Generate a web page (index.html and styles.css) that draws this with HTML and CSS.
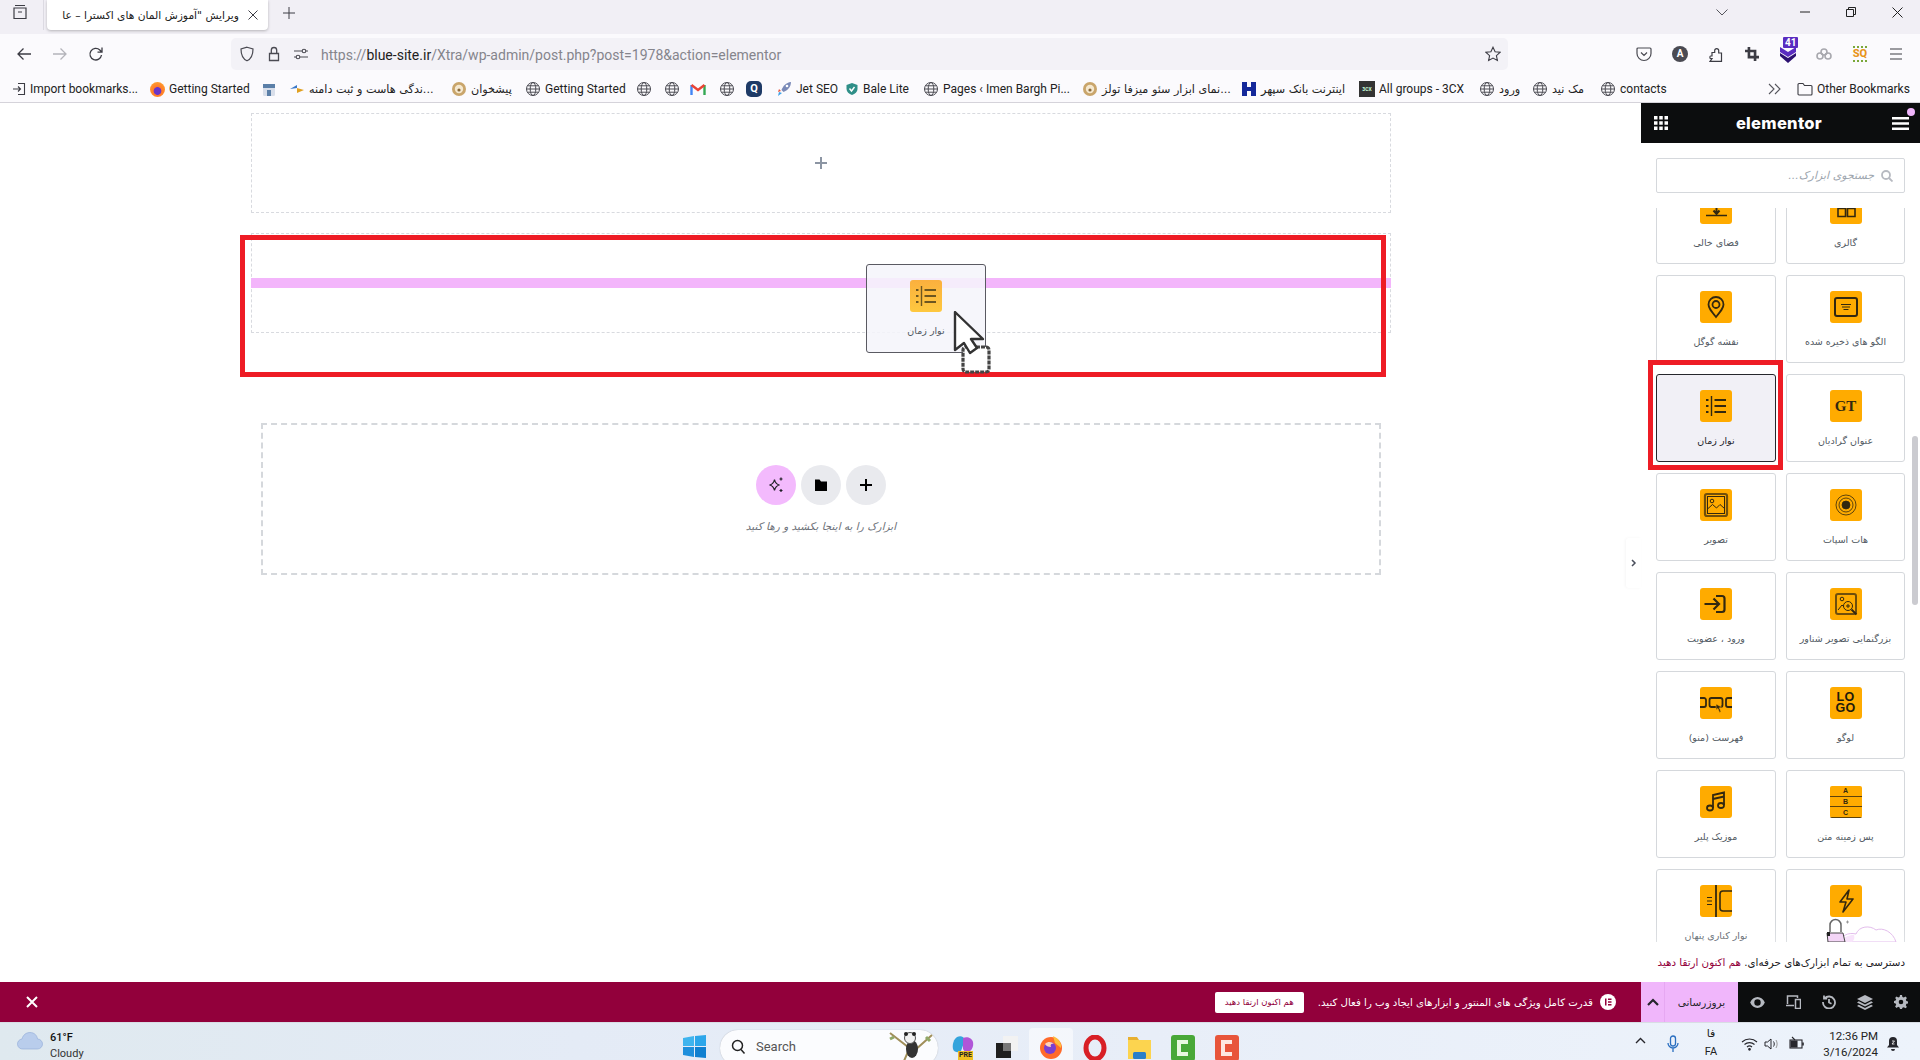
FILE: index.html
```html
<!DOCTYPE html>
<html lang="fa">
<head>
<meta charset="utf-8">
<title>Elementor</title>
<link rel="stylesheet" href="styles.css">
</head>
<body>
<svg class="defs" aria-hidden="true">
  <symbol id="globe" viewBox="0 0 16 16"><g fill="none" stroke="#4a4a52" stroke-width="1"><circle cx="8" cy="8" r="6.5"/><ellipse cx="8" cy="8" rx="2.8" ry="6.5"/><path d="M1.5 8h13M2.5 4.8h11M2.5 11.2h11"/></g></symbol>
  <symbol id="lion" viewBox="0 0 16 16"><circle cx="8" cy="8" r="7" fill="#c9a56b"/><circle cx="8" cy="8" r="4.2" fill="#f5e8cf"/><circle cx="8" cy="9" r="1.6" fill="#8a6a3a"/></symbol>
</svg>

<header class="tabs">
  <div class="tab-list"><svg width="16" height="16" viewBox="0 0 16 16" fill="none" stroke="#3c3c44" stroke-width="1.2"><path d="M3 1.5h10M2 4h12v10.5H2zM6 8h4"/></svg></div>
  <div class="tab-sep"></div>
  <div class="tab">
    <span class="tab-title">ویرایش "آموزش المان های اکسترا – عا</span>
    <svg width="10" height="10" viewBox="0 0 10 10" stroke="#3c3c44" fill="none"><path d="M.5.5l9 9M9.5.5l-9 9"/></svg>
  </div>
  <div class="tab-new"><svg width="12" height="12" viewBox="0 0 12 12" stroke="#3c3c44" fill="none"><path d="M6 0v12M0 6h12"/></svg></div>
  <div class="win">
    <svg class="win-chev" width="12" height="7" viewBox="0 0 12 7" stroke="#55555c" fill="none"><path d="M.5.5L6 6l5.5-5.5"/></svg>
    <svg class="win-btn" width="10" height="10" viewBox="0 0 10 10" stroke="#222" fill="none"><path d="M0 5h10"/></svg>
    <svg class="win-btn" width="10" height="10" viewBox="0 0 10 10" stroke="#222" fill="none"><path d="M.5 2.5h7v7h-7zM2.5 2.5v-2h7v7h-2"/></svg>
    <svg class="win-btn" width="11" height="11" viewBox="0 0 11 11" stroke="#222" fill="none"><path d="M.5.5l10 10M10.5.5l-10 10"/></svg>
  </div>
</header>

<nav class="nav">
  <div class="nav-btn"><svg width="16" height="16" viewBox="0 0 16 16" fill="none" stroke="#3c3c44" stroke-width="1.3"><path d="M15 8H2M7.5 2.5L2 8l5.500 5.500"/></svg></div>
  <div class="nav-btn"><svg width="16" height="16" viewBox="0 0 16 16" fill="none" stroke="#b4b4ba" stroke-width="1.3"><path d="M1 8h13M8.500 2.500L14 8l-5.500 5.500"/></svg></div>
  <div class="nav-btn"><svg width="16" height="16" viewBox="0 0 16 16" fill="none" stroke="#3c3c44" stroke-width="1.3"><path d="M13.500 9a5.800 5.800 0 1 1-1.700-5L14 6.200M14 1.500v4.700H9.500"/></svg></div>
  <div class="url">
    <svg class="url-ic" width="16" height="16" viewBox="0 0 16 16" fill="none" stroke="#4a4a52" stroke-width="1.2"><path d="M8 1.200l6 1.800c0 6-1.500 9.800-6 11.800-4.500-2-6-5.800-6-11.800z"/></svg>
    <svg class="url-ic" width="16" height="16" viewBox="0 0 16 16" fill="none" stroke="#4a4a52" stroke-width="1.3"><path d="M3.500 7.500h9v7h-9zM5.300 7.500V4.200a2.700 2.700 0 0 1 5.400 0v3.300"/></svg>
    <svg class="url-ic" width="16" height="16" viewBox="0 0 16 16" fill="none" stroke="#4a4a52" stroke-width="1.1"><path d="M1 5h8M13 5h2M1 11h2M7 11h8"/><circle cx="11" cy="5" r="1.800"/><circle cx="5" cy="11" r="1.800"/></svg>
    <span class="url-text">https://<b>blue-site.ir</b>/Xtra/wp-admin/post.php?post=1978&amp;action=elementor</span>
    <svg class="url-star" width="16" height="16" viewBox="0 0 16 16" fill="none" stroke="#3c3c44" stroke-width="1.1"><path d="M8 1.200l2.100 4.500 4.900.6-3.600 3.300 1 4.900L8 12.100l-4.400 2.400 1-4.900L1 6.300l4.900-.6z"/></svg>
  </div>
  <div class="tools">
    <div class="tool"><svg width="16" height="16" viewBox="0 0 16 16" fill="none" stroke="#4a4a52" stroke-width="1.2"><path d="M2 2h12a1 1 0 0 1 1 1v4.500a7 7 0 0 1-14 0V3a1 1 0 0 1 1-1zM5 6.500l3 3 3-3"/></svg></div>
    <div class="tool"><span class="avatar">A</span></div>
    <div class="tool"><svg width="14" height="16" viewBox="0 0 14 16" fill="none" stroke="#3c3c44" stroke-width="1.200"><path d="M1 15.300h11.500V7H9.700V4.800a2 2 0 0 0-2-2.200 2 2 0 0 0-2 2.200V6.500H3V10H1.500c-.8 0-.8 2.500 0 2.500H3z"/></svg></div>
    <div class="tool"><svg width="14" height="14" viewBox="0 0 16 16" fill="none" stroke="#3c3c44" stroke-width="3"><path d="M4.500 0v11.500H16M0 4.500h11.500V16"/></svg></div>
    <div class="tool ublock"><svg width="18" height="20" viewBox="0 0 18 20"><path d="M1 3l8 5 8-5v5l-8 5-8-5z" fill="#5a2cc0"/><path d="M1 9l8 5 8-5v3l-8 7-8-7z" fill="#2c1070"/></svg><span class="ublock-n">41</span></div>
    <div class="tool"><svg width="18" height="16" viewBox="0 0 18 16" fill="none" stroke="#a8a8ae" stroke-width="1.6"><circle cx="5" cy="10" r="3"/><circle cx="9" cy="6" r="3"/><circle cx="13" cy="10" r="3"/></svg></div>
    <div class="tool"><span class="sq">SQ</span></div>
    <div class="tool"><svg width="14" height="12" viewBox="0 0 14 12" stroke="#3c3c44" fill="none" stroke-width="1.2"><path d="M1 1h12M1 6h12M1 11h12"/></svg></div>
  </div>
</nav>

<div class="bookmarks">
  <div class="bm"><svg width="14" height="14" viewBox="0 0 14 14" fill="none" stroke="#3c3c44" stroke-width="1.1"><path d="M6 1.500h6.500v11H6M1 7h7.500M6 4.500L8.500 7 6 9.500"/></svg><span>Import bookmarks...</span></div>
  <div class="bm"><span class="ff-sm"></span><span>Getting Started</span></div>
  <div class="bm"><svg width="14" height="16" viewBox="0 0 14 16"><rect x="1" y="3" width="12" height="12" rx="1.500" fill="#d8deea"/><rect x="1" y="3" width="12" height="4" fill="#5b7fa8"/><rect x="5" y="9" width="4" height="6" fill="#5b7fa8"/></svg></div>
  <div class="bm"><svg width="16" height="12" viewBox="0 0 16 12"><path d="M1 6l7-4v3z" fill="#3a78c8"/><path d="M8 5l7 2-7 3z" fill="#e0a020"/></svg><span class="fa">...ندگی هاست و ثبت دامنه</span></div>
  <div class="bm"><svg width="16" height="16"><use href="#lion"/></svg><span class="fa">پیشخوان</span></div>
  <div class="bm"><svg width="16" height="16"><use href="#globe"/></svg><span>Getting Started</span></div>
  <div class="bm"><svg width="16" height="16"><use href="#globe"/></svg></div>
  <div class="bm"><svg width="16" height="16"><use href="#globe"/></svg></div>
  <div class="bm"><svg width="16" height="12" viewBox="0 0 16 12" fill="none" stroke-width="2.400"><path d="M1.500 12V2" stroke="#4285f4"/><path d="M14.500 12V2" stroke="#34a853"/><path d="M1.500 2L8 7l6.500-5" stroke="#ea4335"/></svg></div>
  <div class="bm"><svg width="16" height="16"><use href="#globe"/></svg></div>
  <div class="bm"><span class="bm-q">Q</span></div>
  <div class="bm"><svg width="16" height="16" viewBox="0 0 16 16"><path d="M15 1c-5 .5-8 4-9.500 8l2 2C11.500 9.500 15 6 15 1z" fill="#7a8ab8"/><circle cx="11" cy="5" r="1.300" fill="#fff"/><path d="M5 10l-3 1 1-3z" fill="#e8523a"/><path d="M6 12l-4 3 1-4z" fill="#3aa0e8"/></svg><span>Jet SEO</span></div>
  <div class="bm"><svg width="14" height="14" viewBox="0 0 14 14"><path d="M7 1l5.500 2v4c0 3-2.500 5-5.500 6-3-1-5.500-3-5.500-6V3z" fill="#2f8f88"/><path d="M4.500 6.500L6.500 9l3-4" fill="none" stroke="#fff" stroke-width="1.400"/></svg><span>Bale Lite</span></div>
  <div class="bm"><svg width="16" height="16"><use href="#globe"/></svg><span>Pages ‹ Imen Bargh Pi...</span></div>
  <div class="bm"><svg width="16" height="16"><use href="#lion"/></svg><span class="fa">...نمای ابزار سئو میزفا تولز</span></div>
  <div class="bm"><svg width="16" height="16" viewBox="0 0 16 16" fill="#14289a"><path d="M1 1h5v14H1zM10 1h5v14h-5z"/><path d="M6 6h4v4H6z"/></svg><span class="fa">اینترنت بانک سپهر</span></div>
  <div class="bm"><span class="bm-3cx">3CX</span><span>All groups - 3CX</span></div>
  <div class="bm"><svg width="16" height="16"><use href="#globe"/></svg><span class="fa">ورود</span></div>
  <div class="bm"><svg width="16" height="16"><use href="#globe"/></svg><span class="fa">مک نید</span></div>
  <div class="bm"><svg width="16" height="16"><use href="#globe"/></svg><span>contacts</span></div>
  <div class="bm"><svg width="14" height="12" viewBox="0 0 14 12" fill="none" stroke="#55555c" stroke-width="1.100"><path d="M1 1l5 5-5 5M7 1l5 5-5 5"/></svg></div>
  <div class="bm"><svg width="16" height="14" viewBox="0 0 16 14" fill="none" stroke="#3c3c44" stroke-width="1.100"><path d="M1 12V2.500A1 1 0 0 1 2 1.500h4l1.500 2H14a1 1 0 0 1 1 1V12a1 1 0 0 1-1 1H2a1 1 0 0 1-1-1z"/></svg><span>Other Bookmarks</span></div>
</div>

<main class="main">
  <section class="canvas">
    <div class="sec sec-top">
      <svg width="14" height="14" viewBox="0 0 14 14" stroke="#8c95a3" stroke-width="2" fill="none"><path d="M7 1v12M1 7h12"/></svg>
    </div>
    <div class="sec sec-drop"><div class="drop-line"></div></div>
    <div class="dropzone">
      <div class="dz-btns">
        <span class="dz-btn dz-ai"><svg width="18" height="18" viewBox="0 0 18 18" fill="none" stroke="#1d1d24" stroke-width="1.200"><path d="M7.500 3.500c.7 3.700 1.800 4.800 5 5.500-3.200.7-4.300 1.800-5 5.500-.7-3.700-1.800-4.800-5-5.500 3.200-.7 4.300-1.800 5-5.500z"/><path d="M14 1.500v3M12.500 3h3M14 13v3M12.500 14.500h3"/></svg></span>
        <span class="dz-btn"><svg width="14" height="14" viewBox="0 0 14 14" fill="#000"><path d="M1 1.500h4.500L7 3.500h6V13H1z"/></svg></span>
        <span class="dz-btn"><svg width="12" height="12" viewBox="0 0 12 12" stroke="#000" stroke-width="2" fill="none"><path d="M6 0v12M0 6h12"/></svg></span>
      </div>
      <p class="dz-text">ابزارک را به اینجا بکشید و رها کنید</p>
    </div>
    <div class="promo-bar">
      <button class="pb-close"><svg width="12" height="12" viewBox="0 0 12 12" stroke="#fff" stroke-width="2" fill="none"><path d="M1 1l10 10M11 1L1 11"/></svg></button>
      <div class="pb-msg">
        <span class="pb-logo"><svg width="16" height="16" viewBox="0 0 16 16"><circle cx="8" cy="8" r="8" fill="#fff"/><path d="M5 4.500h1.500v7H5zM8 4.500h3.500V6H8zM8 7.250h3.500v1.500H8zM8 10h3.500v1.500H8z" fill="#92003b"/></svg></span>
        <span class="pb-text">قدرت کامل ویژگی های المنتور و ابزارهای ایجاد وب را فعال کنید.</span>
        <span class="pb-cta">هم اکنون ارتقا دهید</span>
      </div>
    </div>
  </section>

  <aside class="panel">
    <div class="p-head">
      <svg width="14" height="14" viewBox="0 0 14 14" fill="#fff"><path d="M0 0h3.500v3.500H0zM5.250 0h3.500v3.500h-3.500zM10.500 0H14v3.500h-3.500zM0 5.250h3.500v3.500H0zM5.250 5.250h3.500v3.500h-3.500zM10.500 5.250H14v3.500h-3.500zM0 10.500h3.500V14H0zM5.250 10.500h3.500V14h-3.500zM10.500 10.500H14V14h-3.500z"/></svg>
      <span class="p-logo">elementor</span>
      <svg width="17" height="13" viewBox="0 0 17 13" fill="#fff"><path d="M0 0h17v2.600H0zM0 5.200h17v2.600H0zM0 10.400h17V13H0z"/></svg>
      <i class="p-dot"></i>
    </div>
    <div class="p-search">
      <div class="p-input">
        <svg width="12" height="12" viewBox="0 0 12 12" fill="none" stroke="#b7bac1" stroke-width="1.800"><circle cx="5" cy="5" r="4"/><path d="M8 8l3.500 3.500"/></svg>
        <span>جستجوی ابزارک...</span>
      </div>
    </div>
    <div class="p-scroll">
      <div class="p-grid">
        <div class="w"><span class="w-i"><svg viewBox="0 0 32 32" fill="none" stroke="#33280f" stroke-width="1.600"><path d="M8 16.500h7.500v8H8zM17.500 16.500H25v8h-7.500z"/></svg></span><span class="w-l">گالری</span></div>
        <div class="w"><span class="w-i"><svg viewBox="0 0 32 32" fill="none" stroke="#33280f" stroke-width="1.600"><path d="M6 23.500h21"/><path d="M16.500 10v12M13.500 18.500l3 3.500 3-3.500" stroke-width="2"/></svg></span><span class="w-l">فضای خالی</span></div>
        <div class="w"><span class="w-i"><svg viewBox="0 0 32 32" fill="none" stroke="#33280f" stroke-width="2"><rect x="5" y="7" width="22" height="18" rx="2"/><path d="M11 13.500h10M12 16h8M13.500 18.500h5" stroke-width="1"/></svg></span><span class="w-l">الگو های ذخیره شده</span></div>
        <div class="w"><span class="w-i"><svg viewBox="0 0 32 32" fill="none" stroke="#33280f" stroke-width="1.800"><path d="M16 26c-5-6-7.500-9-7.500-12.500a7.500 7.500 0 0 1 15 0C23.500 17 21 20 16 26z"/><circle cx="16" cy="13.500" r="3.500"/></svg></span><span class="w-l">نقشه گوگل</span></div>
        <div class="w"><span class="w-i w-gt">GT</span><span class="w-l">عنوان گرادیان</span></div>
        <div class="w w-on"><span class="w-i"><svg viewBox="0 0 32 32" fill="none" stroke="#33280f"><path d="M6 10h2.500M6 16h2.500M6 22h2.500" stroke-width="2"/><path d="M11.500 6v20" stroke-width="1.400"/><path d="M14.500 10H26M14.500 16H26M14.500 22H26" stroke-width="1.800"/></svg></span><span class="w-l">نوار زمان</span></div>
        <div class="w"><span class="w-i"><svg viewBox="0 0 32 32" fill="none" stroke="#33280f" stroke-width=".8"><circle cx="16" cy="16" r="4" fill="#33280f"/><circle cx="16" cy="16" r="7"/><circle cx="16" cy="16" r="10"/></svg></span><span class="w-l">هات اسپات</span></div>
        <div class="w"><span class="w-i"><svg viewBox="0 0 32 32" fill="none" stroke="#33280f" stroke-width="1"><rect x="5" y="5" width="22" height="22" rx="2" stroke-width="2.200" stroke-opacity=".7"/><rect x="7.500" y="7.500" width="17" height="17"/><circle cx="12" cy="12" r="1.800"/><path d="M7.500 20l5-4.500 4 3.500 3.500-3.500 4.500 4"/></svg></span><span class="w-l">تصویر</span></div>
        <div class="w"><span class="w-i"><svg viewBox="0 0 32 32" fill="none" stroke="#33280f" stroke-width="1"><rect x="6" y="6" width="20" height="20" rx="2" stroke-width="2" stroke-opacity=".7"/><circle cx="12" cy="11" r="1.800"/><circle cx="18" cy="18" r="4.500"/><path d="M16 18h4M18 16v4"/><path d="M21.500 21.500l5 5" stroke-width="2"/><path d="M8 22l4-5 2 2"/></svg></span><span class="w-l">بزرگنمایی تصویر شناور</span></div>
        <div class="w"><span class="w-i"><svg viewBox="0 0 32 32" fill="none" stroke="#33280f" stroke-width="2.200"><path d="M4.500 16H19M13.500 10.500L19 16l-5.500 5.500M16 8h6a2.500 2.500 0 0 1 2.500 2.500v11A2.500 2.500 0 0 1 22 24h-6"/></svg></span><span class="w-l">ورود ، عضویت</span></div>
        <div class="w"><span class="w-i w-logo">LO<br>GO</span><span class="w-l">لوگو</span></div>
        <div class="w"><span class="w-i"><svg viewBox="0 0 32 32" fill="none" stroke="#33280f" stroke-width="1.800"><path d="M0 11h4a2 2 0 0 1 2 2v5a2 2 0 0 1-2 2H0M32 11h-4a2 2 0 0 0-2 2v5a2 2 0 0 0 2 2h4"/><rect x="9.500" y="11" width="13" height="9" rx="2"/><path d="M16 17l5.500 3-2.200.8 1.700 4-1.500.6-1.600-4-1.700 1.500z" fill="#33280f" stroke="#ffab00" stroke-width=".6"/></svg></span><span class="w-l">فهرست (منو)</span></div>
        <div class="w"><span class="w-i w-abc"><span>A</span><span>B</span><span>C</span></span><span class="w-l">پس زمینه متن</span></div>
        <div class="w"><span class="w-i"><svg viewBox="0 0 32 32" fill="none" stroke="#33280f" stroke-width="1.800"><path d="M13 22V9l11-2.500v12.500"/><ellipse cx="10" cy="22" rx="3" ry="2.500"/><ellipse cx="21" cy="19.500" rx="3" ry="2.500"/><path d="M13 13l11-2.500"/></svg></span><span class="w-l">موزیک پلیر</span></div>
        <div class="w"><span class="w-i"><svg viewBox="0 0 32 32" fill="none" stroke="#33280f" stroke-width="1.600" stroke-linejoin="round"><path d="M19 5l-9 12h6l-3 10 10-13h-6z"/></svg></span></div>
        <div class="w"><span class="w-i"><svg viewBox="0 0 32 32" fill="none" stroke="#33280f"><path d="M16 0v32" stroke-width="1.800"/><path d="M32 6h-9a3 3 0 0 0-3 3v14a3 3 0 0 0 3 3h9" stroke-width="1.600"/><path d="M7 12.500h5M7 16h5M7 19.500h5" stroke-width="1.200"/></svg></span><span class="w-l">نوار کناری پنهان</span></div>
      </div>
      <div class="p-fade"></div>
      <svg class="p-art" width="76" height="24" viewBox="0 0 76 24" fill="none">
        <path d="M14 24c1-6 8-10 16-8 3-8 14-9 20-4 7-3 17 2 20 12z" fill="#fff" stroke="#e3bdec" stroke-width="1"/>
        <path d="M16 24c1-5 6-7 12-7 1 3 0 5-2 7z" fill="#f8e4fb"/>
        <path d="M4 14V7a5.500 5.500 0 0 1 11 0v7" stroke="#666" stroke-width="1.500"/>
        <path d="M1 15h16l2 9H2z" fill="#f3d5f6" stroke="#444" stroke-width="1"/>
        <rect x="1" y="14" width="3" height="4" fill="#222"/>
        <path d="M20 4h3M21.500 2.500v3" stroke="#888" stroke-width=".8"/>
      </svg>
    </div>
    <div class="p-promo">دسترسی به تمام ابزارک‌های حرفه‌ای. <a>هم اکنون ارتقا دهید</a></div>
    <div class="p-foot">
      <div class="pf-pink">
        <span class="pf-chev"><svg width="12" height="8" viewBox="0 0 12 8" fill="none" stroke="#26262c" stroke-width="2.200"><path d="M1 7l5-5 5 5"/></svg></span>
        <span class="pf-update">بروزرسانی</span>
      </div>
      <div class="pf-tools">
        <span><svg width="15" height="11" viewBox="0 0 16 12" fill="#b6b9c0"><path d="M8 0c3.500 0 6.500 2.500 8 6-1.500 3.500-4.500 6-8 6S1.500 9.500 0 6c1.500-3.500 4.500-6 8-6zm0 2.500a3.500 3.500 0 1 0 0 7 3.500 3.500 0 0 0 0-7z"/></svg></span>
        <span><svg width="15" height="14" viewBox="0 0 15 14" fill="none" stroke="#b6b9c0" stroke-width="1.500"><path d="M1.500 9V1h10v2M0 10.500h8M9.500 4.500h5v9h-5z"/></svg></span>
        <span><svg width="14" height="14" viewBox="0 0 14 14" fill="none" stroke="#b6b9c0" stroke-width="1.800"><path d="M2.500 3.500A6 6 0 1 1 1 7M2 .5v3.200h3.200M7 4v3.500l2.500 1.200"/></svg></span>
        <span><svg width="16" height="15" viewBox="0 0 16 15" fill="#b6b9c0"><path d="M8 0l8 4-8 4-8-4zM1.800 6.300L8 9.500l6.200-3.200L16 7.500l-8 4-8-4zM1.800 9.800L8 13l6.200-3.200L16 11l-8 4-8-4z"/></svg></span>
        <span><svg width="14" height="14" viewBox="0 0 14 14" fill="#b6b9c0"><path d="M6 0h2l.4 2 1.400.6L11.500 1.500 12.900 3l-1.100 1.700.6 1.300 1.600.4v2l-1.600.4-.6 1.400 1.100 1.700-1.400 1.400-1.700-1.100-1.400.6L8 14H6l-.4-1.600-1.400-.6-1.700 1.100L1.100 11.500l1.100-1.700-.6-1.400L0 8V6l1.600-.4.600-1.300L1.100 3l1.400-1.500 1.700 1.100 1.400-.6zM7 4.700a2.300 2.300 0 1 0 0 4.600 2.300 2.300 0 0 0 0-4.600z"/></svg></span>
      </div>
    </div>
    <div class="p-scrollbar"></div>
    <div class="p-toggle"><svg width="6" height="8" viewBox="0 0 6 8" fill="none" stroke="#4a4f5c" stroke-width="1.500"><path d="M1 1l3 3-3 3"/></svg></div>
  </aside>

  <div class="mark mark-canvas"></div>
  <div class="mark mark-widget"></div>
  <div class="drag">
    <span class="w-i drag-i"><svg viewBox="0 0 32 32" fill="none" stroke="#6d5620"><path d="M6 10h2.500M6 16h2.500M6 22h2.500" stroke-width="2"/><path d="M11.500 6v20" stroke-width="1.400"/><path d="M14.500 10H26M14.500 16H26M14.500 22H26" stroke-width="1.800"/></svg></span>
    <span class="w-l">نوار زمان</span>
  </div>
  <svg class="cursor" width="40" height="64" viewBox="0 0 40 64">
    <rect x="10" y="36" width="26" height="25" rx="3" fill="#fff" stroke="#444" stroke-width="3.200" stroke-dasharray="4 1"/>
    <path d="M2 1v38l9-7 6 10 7-5-6-9h12z" fill="#fff" stroke="#333" stroke-width="2.400" stroke-linejoin="round"/>
  </svg>
</main>

<footer class="taskbar">
  <div class="tb-weather">
    <svg width="26" height="18" viewBox="0 0 26 18"><path d="M6 17a5 5 0 0 1-1-10c1-4 4-6.500 8-6.500 4.500 0 7 3 7.500 6.500a5 5 0 0 1 0 10z" fill="#b9cdec" stroke="#8eaad6" stroke-width=".6"/></svg>
    <div class="tb-wtext"><b>61°F</b><span>Cloudy</span></div>
  </div>
  <div class="tb-center">
    <svg class="tb-start" width="23" height="23" viewBox="0 0 23 23"><path d="M0 3l11-2v10H0z" fill="#3fb4ee"/><path d="M12 1l11-1v11H12z" fill="#2ca6ea"/><path d="M0 12h11v10L0 20z" fill="#1e8fdc"/><path d="M12 12h11v11l-11-1z" fill="#0f7fd0"/></svg>
    <div class="tb-search">
      <svg width="15" height="15" viewBox="0 0 15 15" fill="none" stroke="#222" stroke-width="1.500"><circle cx="6.500" cy="6.500" r="5"/><path d="M10 10.500l3.500 4"/></svg>
      <span>Search</span>
      <svg class="tb-panda" width="46" height="30" viewBox="0 0 46 30"><path d="M2 2l18 14M44 4L26 20M16 30l6-14" stroke="#a08f5a" stroke-width="2" fill="none"/><path d="M6 6l-4 2M38 6l4 4" stroke="#90a868" stroke-width="3"/><ellipse cx="24" cy="18" rx="6" ry="9" fill="#333"/><circle cx="22" cy="7" r="5.500" fill="#f1f1f1" stroke="#555"/><circle cx="18" cy="3" r="2" fill="#222"/><circle cx="26" cy="3" r="2" fill="#222"/></svg>
    </div>
    <div class="tb-app tb-copilot"><svg width="24" height="24" viewBox="0 0 24 24"><path d="M6 2c4-2 7 0 8 3l-4 11c-1 2-7 2-8-2C1 9 3 4 6 2z" fill="#34a4dc"/><path d="M12 3c4-2 9 0 10 4 1 5-2 10-6 10-2 0-3-1-4-3z" fill="#b056d8"/></svg><span class="pre">PRE</span></div>
    <div class="tb-app"><svg width="24" height="24" viewBox="0 0 24 24"><rect x="8" y="1" width="15" height="15" fill="#f2f2f2"/><path d="M1 8h15v15H1z" fill="#1e1e1e"/><path d="M8 8h8v8H8z" fill="#777"/></svg></div>
    <div class="tb-app tb-active"><svg width="24" height="24" viewBox="0 0 24 24"><circle cx="12" cy="13" r="11" fill="#ff6a2b"/><path d="M14 1c5 2 9 7 8 12L16 8z" fill="#ffbd3a"/><circle cx="11" cy="13" r="6" fill="#7b3fd0"/><path d="M6 9c3-3 7-2 9 0-3-1-4 1-3 3-3 0-5-1-6-3z" fill="#ffd2b8"/></svg></div>
    <div class="tb-app"><svg width="24" height="26" viewBox="0 0 24 26"><ellipse cx="12" cy="13" rx="9" ry="11" fill="none" stroke="#d81f26" stroke-width="5"/></svg></div>
    <div class="tb-app"><svg width="24" height="24" viewBox="0 0 24 24"><path d="M1 2h9l2 3H1z" fill="#e8b030"/><path d="M1 5h23v19H1z" fill="#fcd44f"/><rect x="6" y="17" width="13" height="7" rx="1.500" fill="#2a7fc8"/></svg></div>
    <div class="tb-app"><svg width="24" height="26" viewBox="0 0 24 26"><rect width="24" height="26" rx="3" fill="#48a838"/><path d="M17 7H8v12h9" fill="none" stroke="#e8f8e0" stroke-width="4"/></svg></div>
    <div class="tb-app"><svg width="24" height="26" viewBox="0 0 24 26"><rect width="24" height="26" rx="3" fill="#e8553a"/><path d="M17 7H8v12h9" fill="none" stroke="#fde8e0" stroke-width="4"/></svg></div>
  </div>
  <div class="tray">
    <svg width="11" height="7" viewBox="0 0 11 7" fill="none" stroke="#26262c" stroke-width="1.400"><path d="M1 6l4.500-4.500L10 6"/></svg>
    <svg class="tr-mic" width="12" height="18" viewBox="0 0 12 18" fill="none" stroke="#2a6fc0" stroke-width="1.300"><rect x="3.500" y="1" width="5" height="10" rx="2.500"/><path d="M1 8a5 5 0 0 0 10 0M6 13v4"/></svg>
    <div class="tr-lang"><span class="fa">فا</span><span>FA</span></div>
    <svg class="tr-wifi" width="17" height="14" viewBox="0 0 17 14" fill="none" stroke="#26262c" stroke-width="1.100"><path d="M1 5a11 11 0 0 1 15 0M3.500 7.500a7.500 7.500 0 0 1 10 0M6 10a3.800 3.800 0 0 1 5 0"/><circle cx="8.500" cy="12.300" r=".8" fill="#26262c"/></svg>
    <svg class="tr-vol" width="17" height="14" viewBox="0 0 17 14" fill="none" stroke="#26262c" stroke-width="1"><path d="M1 5h2.500L7 2v10L3.500 9H1z"/><path d="M9.500 4.500c1 1.500 1 3.500 0 5"/><path d="M12 3c1.500 2.500 1.500 5.500 0 8" stroke="#999"/></svg>
    <svg class="tr-bat" width="16" height="14" viewBox="0 0 16 14" fill="none" stroke="#26262c" stroke-width="1.100"><rect x="1" y="4" width="12" height="8"/><path d="M14 6.500v3" stroke-width="1.600"/><path d="M2 5h6v6H2z" fill="#26262c"/><path d="M3 1l3 3"/></svg>
    <div class="tr-time"><span>12:36 PM</span><span>3/16/2024</span></div>
    <svg class="tr-bell" width="14" height="16" viewBox="0 0 14 16"><path d="M7 1a4 4 0 0 1 4 4v4l2 2.500H1L3 9V5a4 4 0 0 1 4-4zM5 13h4a2 2 0 0 1-4 0z" fill="#26262c"/><path d="M6 5h2.500L6 8h2.500" fill="none" stroke="#fff" stroke-width=".8"/></svg>
  </div>
</footer>
</body>
</html>
```

FILE: styles.css
```css
* { box-sizing: border-box; }
html, body { margin: 0; height: 1060px; overflow: hidden; }
body {
  position: relative;
  display: flex;
  flex-direction: column;
  width: 1920px;
  background: #fff;
  font-family: Roboto, "Open Sans", "DejaVu Sans", sans-serif;
  color: #222;
}
.defs { position: absolute; width: 0; height: 0; }
svg { flex: none; display: block; }
.fa { font-family: "DejaVu Sans", sans-serif; direction: rtl; }

/* tab strip */
.tabs { flex: 0 0 34px; display: flex; background: #f1eff5; position: relative; }
.tab-list { width: 43px; padding: 4px 0 0 12px; }
.tab-sep { width: 1px; height: 30px; background: #dcdae2; }
.tab {
  margin-left: 3px; width: 221px; height: 30px;
  display: flex; align-items: center; gap: 9px;
  padding: 0 11px 0 14px;
  background: #fff; border-radius: 0 0 4px 4px; box-shadow: 0 1px 3px rgba(0,0,0,.25);
}
.tab-title {
  flex: 0 0 178px; direction: rtl; white-space: nowrap;
  font: 10.7px "DejaVu Sans", sans-serif; color: #222;
}
.tab-new { margin-left: 15px; padding-top: 7px; }
.win { margin-left: auto; display: flex; align-items: center; height: 24px; padding-right: 17px; }
.win-chev { margin-right: 72px; }
.win-btn { margin-left: 36px; }
.win-chev + .win-btn { margin-left: 0; }

/* nav */
.nav { flex: 0 0 36px; display: flex; align-items: flex-start; padding: 4px 0 0 6px; background: #fbfafd; }
.nav-btn { width: 36px; height: 32px; display: flex; align-items: center; justify-content: center; }
.url {
  margin-left: 117px; width: 1277px; height: 32px;
  display: flex; align-items: center;
  background: #f3f2f7; border-radius: 5px; padding-left: 8px;
}
.url-ic { margin-right: 11px; }
.url-ic:nth-of-type(3) { margin-right: 12px; }
.url-text { font-size: 14px; color: #85858c; white-space: nowrap; padding-top: 1px; }
.url-text b { font-weight: 400; color: #1e1e22; }
.url-star { margin-left: auto; margin-right: 7px; }
.tools { margin-left: 118px; display: flex; }
.tool { width: 36px; height: 32px; display: flex; align-items: center; justify-content: center; position: relative; }
.avatar {
  width: 16px; height: 16px; border-radius: 50%; background: #4a4a52; color: #fff;
  font: 700 10px/16px Roboto, sans-serif; text-align: center;
}
.ublock-n {
  position: absolute; top: -1px; left: 13px; padding: 0 2px; height: 11px; border-radius: 1px;
  background: #5a2cc0; color: #fff; font: 700 10px/11px Roboto, sans-serif;
}
.sq { font: 800 11px/12px Roboto, sans-serif; color: #e8941a; border-top: 2px dotted #7aa83a; border-bottom: 2px dotted #7aa83a; }

/* bookmarks */
.bookmarks {
  flex: 0 0 33px; background: #fbfafd; border-bottom: 1px solid #d5d3da; padding: 6px 0 0 12px;
  display: grid; align-items: center;
  grid-template-columns: 138px 112px 27px 162px 74px 111px 28px 26px 29px 27px 30px 69px 78px 159px 159px 118px 120px 53px 68px 168px 29px 110px;
  font-size: 12px; white-space: nowrap;
}
.bm { display: flex; align-items: center; gap: 4px; height: 16px; min-width: 0; }
.bm .fa { font-size: 11.2px; }
.ff-sm { width: 15px; height: 15px; border-radius: 50%; background: radial-gradient(circle at 50% 60%, #6a35c8 30%, #ff7a2a 36%, #ffb030); }
.bm-q { width: 16px; height: 16px; border-radius: 5px; background: #1e3a66; color: #fff; font: 700 11px/16px Roboto, sans-serif; text-align: center; }
.bm-3cx { width: 16px; height: 16px; background: #333; color: #cfd; font: 700 5px/16px Roboto, sans-serif; text-align: center; }

/* main */
.main { flex: 1; display: flex; min-height: 0; position: relative; }
.canvas { flex: 0 0 1641px; display: flex; flex-direction: column; padding-top: 10px; background: #fff; }
.sec { flex: 0 0 100px; margin: 0 250px 0 251px; border: 1px dashed #d8dadf; }
.sec-top { display: flex; align-items: center; justify-content: center; margin-bottom: 20px; }
.sec-drop { padding-top: 44px; margin-bottom: 90px; }
.drop-line { height: 10px; margin: 0 -1px; background: #f3b5fb; }
.dropzone {
  flex: 0 0 152px; margin: 0 260px 0 261px;
  border: 2px dashed #d5d8dc;
  padding-top: 40px;
  display: flex; flex-direction: column; align-items: center;
}
.dz-btns { display: flex; gap: 5px; }
.dz-btn { width: 40px; height: 40px; border-radius: 50%; background: #e9eaee; display: flex; align-items: center; justify-content: center; }
.dz-ai { background: #f3bafd; }
.dz-text { margin: 15px 0 0; font: italic 10.5px "DejaVu Sans", sans-serif; color: #6d7179; direction: rtl; }
.promo-bar {
  margin-top: auto; flex: 0 0 40px; background: #92003b; color: #fff;
  display: flex; align-items: center; justify-content: space-between; padding: 0 25px 0 26px;
}
.pb-close { border: 0; background: none; padding: 0; }
.pb-msg { display: flex; align-items: center; direction: rtl; gap: 7px; }
.pb-text { font: 10.2px "DejaVu Sans", sans-serif; white-space: nowrap; }
.pb-cta {
  margin-right: 7px; width: 89px; height: 21px; border-radius: 2px; background: #fff; color: #92003b;
  font: 8.5px/21px "DejaVu Sans", sans-serif; text-align: center; white-space: nowrap;
}

/* panel */
.panel { flex: 1; display: flex; flex-direction: column; min-width: 0; position: relative; background: #fff; }
.p-head {
  flex: 0 0 40px; background: #0c0d0e; color: #fff; position: relative;
  display: flex; align-items: center; justify-content: space-between; padding: 0 11px 0 13px;
}
.p-logo { font: 800 16.5px Inter, sans-serif; letter-spacing: .3px; margin-left: -2px; }
.p-dot { position: absolute; top: 5px; right: 5px; width: 8px; height: 8px; border-radius: 50%; background: #f0b5fb; }
.p-search { flex: 0 0 65px; padding: 15px 15px 0; }
.p-input {
  height: 35px; border: 1px solid #d5d8dc; border-radius: 2px;
  display: flex; align-items: center; direction: rtl; gap: 7px; padding-right: 11px;
  font: italic 11px "DejaVu Sans", sans-serif; color: #9da5ae;
}
.p-scroll { flex: 1; overflow: hidden; position: relative; min-height: 0; }
.p-grid {
  margin: -32px 15px 0; direction: rtl;
  display: grid; grid-template-columns: 119px 120px; column-gap: 10px; grid-auto-rows: 88px; row-gap: 11px;
}
.w {
  border: 1px solid #d5d8dc; border-radius: 3px; background: #fff;
  display: flex; flex-direction: column; align-items: center; padding-top: 15px;
}
.w-on { background: #f1f0f6; border-color: #26262c; }
.w-i {
  flex: none; width: 32px; height: 32px; border-radius: 3px; background: #ffab00; display: block; overflow: hidden;
}
.w-i svg { width: 32px; height: 32px; }
.w-l {
  margin-top: 11px; font: 9.5px/16px "DejaVu Sans", sans-serif; color: #515962;
  white-space: nowrap; direction: rtl;
}
.w-on .w-l { color: #26262c; }
.w-gt { font: 700 15px/32px "Liberation Serif", serif; color: #33280f; text-align: center; }
.w-logo { font: 800 12.5px/11px "Liberation Sans", sans-serif; color: #1e1a0c; text-align: center; padding-top: 5px; letter-spacing: .3px; }
.w-abc {
  display: grid; grid-auto-rows: 1fr; font: 700 7px/1 "Liberation Sans", sans-serif; color: #33280f; text-align: center; direction: ltr; border-radius: 2px;
}
.w-abc span { border-bottom: 1px solid rgba(51,40,15,.8); display: flex; align-items: center; justify-content: center; }
.p-fade {
  position: absolute; left: 0; right: 0; bottom: 0; height: 20px;
  background: linear-gradient(rgba(255,255,255,0), rgba(255,255,255,.2));
}
.p-art { position: absolute; right: 18px; bottom: 0; }
.p-promo {
  flex: 0 0 40px; direction: rtl; padding: 0 15px; white-space: nowrap;
  font: 10.3px/40px "DejaVu Sans", sans-serif; color: #1b1b1f;
}
.p-promo a { color: #92003b; }
.p-foot { flex: 0 0 40px; display: flex; }
.pf-pink { width: 97px; background: #f0b6fb; display: flex; }
.pf-chev { width: 24px; display: flex; align-items: center; justify-content: center; border-right: 1px solid #e6a8f2; }
.pf-update { flex: 1; font: 10.5px/40px "DejaVu Sans", sans-serif; color: #26262c; text-align: center; direction: rtl; }
.pf-tools { flex: 1; background: #0c0d0e; display: flex; padding-left: 1px; }
.pf-tools span { width: 36px; display: flex; align-items: center; justify-content: center; }
.p-scrollbar { position: absolute; top: 333px; right: 2px; width: 6px; height: 169px; border-radius: 3px; background: #cbcbd0; }
.p-toggle {
  position: absolute; top: 435px; left: -15px; width: 15px; height: 50px;
  background: #fff; border-radius: 3px 0 0 3px; box-shadow: -1px 0 3px rgba(0,0,0,.04);
  display: flex; align-items: center; justify-content: center;
}

/* overlays */
.mark { position: absolute; border: 5px solid #ee1c25; pointer-events: none; }
.mark-canvas { left: 240px; top: 132px; width: 1146px; height: 142px; }
.mark-widget { left: 1648px; top: 257px; width: 135px; height: 110px; }
.drag {
  position: absolute; left: 866px; top: 161px; width: 120px; height: 89px;
  border: 1px solid #5a5a62; border-radius: 3px; background: rgba(245,245,250,.86);
  display: flex; flex-direction: column; align-items: center; padding-top: 15px;
}
.drag-i { background: linear-gradient(#fbb03e, #fec83f); }
.cursor { position: absolute; left: 953px; top: 208px; }

/* taskbar */
.taskbar {
  flex: 0 0 38px; position: relative; overflow: hidden;
  background: linear-gradient(90deg, #dfe9ef, #e4ebf6 30%, #e8eef8 60%, #edf3fb);
  border-top: 1px solid #d8dde4;
}
.tb-weather { position: absolute; left: 17px; top: 9px; display: flex; gap: 7px; }
.tb-wtext { display: flex; flex-direction: column; font-size: 11px; line-height: 16px; margin-top: -2px; }
.tb-wtext b { font-weight: 500; color: #111; }
.tb-wtext span { color: #333; }
.tb-center { position: absolute; left: 683px; top: 7px; display: flex; align-items: flex-start; }
.tb-start { margin-top: 5px; }
.tb-search {
  margin-left: 14px; width: 218px; height: 36px; border-radius: 18px; background: #fbfcfe;
  display: flex; align-items: flex-start; padding: 9px 0 0 11px; gap: 10px; position: relative;
  font-size: 13px; color: #555; box-shadow: 0 0 1px rgba(0,0,0,.3);
}
.tb-panda { position: absolute; right: 4px; top: 1px; }
.tb-app { width: 44px; padding: 5px 10px 0; position: relative; height: 36px; }
.tb-copilot { margin-left: 3px; }
.pre { position: absolute; left: 17px; top: 21px; padding: 0 1px; background: #f0c020; color: #222; font: 700 7px/9px Roboto, sans-serif; }
.tb-active { background: rgba(255,255,255,.55); border-radius: 4px 4px 0 0; margin-top: -2px; padding-top: 7px; }
.tray { position: absolute; left: 0; top: 0; right: 0; height: 38px; pointer-events: none; }
.tray > * { position: absolute; }
.tray > svg:nth-of-type(1) { left: 1635px; top: 14px; }
.tr-mic { left: 1667px; top: 12px; }
.tr-lang { left: 1700px; top: 1px; width: 22px; display: flex; flex-direction: column; align-items: center; font-size: 11px; line-height: 16px; }
.tr-lang .fa { font-size: 11px; line-height: 20px; }
.tr-wifi { left: 1741px; top: 14px; }
.tr-vol { left: 1764px; top: 14px; }
.tr-bat { left: 1789px; top: 13px; }
.tr-time { left: 1815px; top: 5px; width: 63px; display: flex; flex-direction: column; align-items: flex-end; font-size: 11.5px; line-height: 16px; color: #222; white-space: nowrap; }
.tr-bell { left: 1886px; top: 13px; }
```
